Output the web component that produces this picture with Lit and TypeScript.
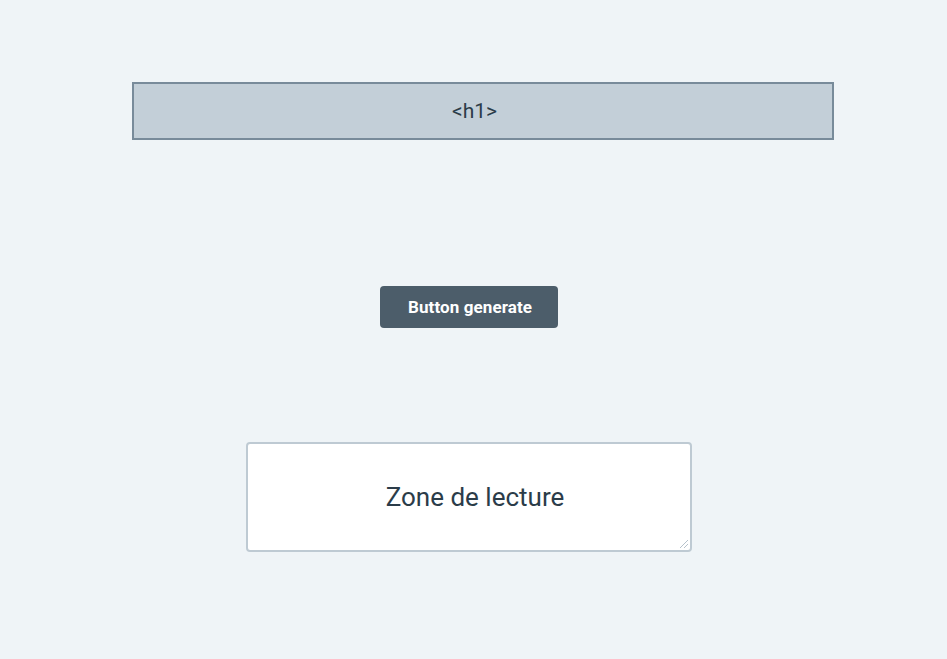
import { LitElement, html, css } from "lit";
import { customElement } from "lit/decorators.js";

@customElement("app-root")
export class AppRoot extends LitElement {
  static styles = css`
    :host {
      display: flex;
      flex-direction: column;
      box-sizing: border-box;
      width: 100%;
      height: 659px;
      padding: 82px 113px 0 132px;
      background: #eff4f7;
      color: #2b3c49;
      font-family: Roboto, "Liberation Sans", sans-serif;
    }
    .title {
      box-sizing: border-box;
      height: 58px;
      margin: 0;
      padding-right: 17px;
      display: flex;
      align-items: center;
      justify-content: center;
      border: 2px solid #788b9a;
      background: #c3cfd8;
      font-size: 21px;
      font-weight: 400;
      white-space: nowrap;
    }
    .column {
      display: flex;
      flex-direction: column;
      align-items: center;
      margin-right: 28px;
    }
    .generate {
      width: 178px;
      height: 42px;
      margin-top: 146px;
      padding: 0 0 0 2px;
      border: 0;
      border-radius: 4px;
      background: #4c5d6a;
      color: #fff;
      font: 700 17px/42px Roboto, "Liberation Sans", sans-serif;
      letter-spacing: 0.1px;
      white-space: nowrap;
    }
    .reader {
      position: relative;
      box-sizing: border-box;
      width: 446px;
      height: 110px;
      margin-top: 114px;
      padding-left: 12px;
      display: flex;
      align-items: center;
      justify-content: center;
      border: 2px solid #becad3;
      border-radius: 4px;
      background: #fff;
      font-size: 26px;
      white-space: nowrap;
    }
    .grip {
      position: absolute;
      right: 1px;
      bottom: 1px;
      width: 10px;
      height: 10px;
      fill: none;
      stroke: #b6c2cc;
    }
    .label { display: block; }
  `;

  render() {
    return html`
      <h1 class="title"><span class="label">&lt;h1&gt;</span></h1>
      <div class="column">
        <button class="generate">Button generate</button>
        <div class="reader">
          <span class="label">Zone de lecture</span>
          <svg class="grip" viewBox="0 0 10 10"><path d="M1 9 9 1M5 9 9 5" /></svg>
        </div>
      </div>
    `;
  }
}
